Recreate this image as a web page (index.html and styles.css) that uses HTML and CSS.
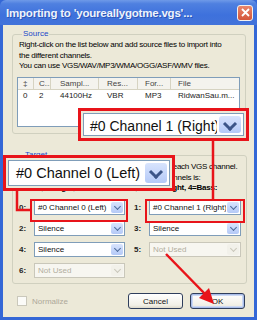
FILE: index.html
```html
<!DOCTYPE html>
<html>
<head>
  <meta charset="UTF-8">
  <title>Importing</title>
  <link rel="stylesheet" href="styles.css">
</head>
<body>
  <div class="window">
    <div class="titlebar">
      <span class="title">Importing to 'youreallygotme.vgs'...</span>
      <span class="close">
        <svg width="9" height="9" viewBox="0 0 9 9"><path d="M1 1L8 8M8 1L1 8" stroke="#fff" stroke-width="1.8"/></svg>
      </span>
    </div>
    <div class="client">
      <fieldset class="group source">
        <legend>Source</legend>
        <p class="hint">Right-click on the list below and add source files to import into<br>the different channels.<br>You can use VGS/WAV/MP3/WMA/OGG/ASF/WMV files.</p>
        <div class="listview">
          <div class="lv-row lv-head">
            <span class="c1">‡</span><span class="c2">C...</span><span class="c3">Sampl...</span><span class="c4">Res...</span><span class="c5">For...</span><span class="c6">File</span>
          </div>
          <div class="lv-row">
            <span class="c1">0</span><span class="c2">2</span><span class="c3">44100Hz</span><span class="c4">VBR</span><span class="c5">MP3</span><span class="c6">RidwanSau.m...</span>
          </div>
        </div>
      </fieldset>
      <fieldset class="group target">
        <legend>Target</legend>
        <p class="hint">Select which of the source channels to use for each VGS channel.<br>The standard (5.1) order of the target VGS channels is:<br><b>0=Left, 1=Right, 2=Surround Left, 3=Surr.Right, 4=Bass:</b></p>
        <div class="channels">
          <span class="ch-label">0:</span><span class="combo"><span class="combo-text">#0 Channel 0 (Left)</span><span class="combo-btn"></span></span>
          <span class="ch-label second">1:</span><span class="combo"><span class="combo-text">#0 Channel 1 (Right)</span><span class="combo-btn"></span></span>
          <span class="ch-label">2:</span><span class="combo"><span class="combo-text">Silence</span><span class="combo-btn"></span></span>
          <span class="ch-label second">3:</span><span class="combo"><span class="combo-text">Silence</span><span class="combo-btn"></span></span>
          <span class="ch-label">4:</span><span class="combo"><span class="combo-text">Silence</span><span class="combo-btn"></span></span>
          <span class="ch-label second">5:</span><span class="combo disabled"><span class="combo-text">Not Used</span><span class="combo-btn"></span></span>
          <span class="ch-label">6:</span><span class="combo disabled"><span class="combo-text">Not Used</span><span class="combo-btn"></span></span>
        </div>
      </fieldset>
      <div class="footer">
        <label class="check"><span class="box"></span>Normalize</label>
        <div class="buttons">
          <button class="btn">Cancel</button>
          <button class="btn default">OK</button>
        </div>
      </div>
    </div>

    <div class="callout callout-right">
      <span class="combo big"><span class="combo-text">#0 Channel 1 (Right)</span><span class="combo-btn"></span></span>
    </div>
    <div class="callout callout-left">
      <span class="combo big"><span class="combo-text">#0 Channel 0 (Left)</span><span class="combo-btn"></span></span>
    </div>
    <div class="mark mark-0"></div>
    <div class="mark mark-1"></div>
    <svg class="lines" width="257" height="320" viewBox="0 0 257 320">
      <path d="M213 140V199" stroke="#e8141a" stroke-width="2.5" fill="none"/>
      <path d="M17 190V210H31" stroke="#e8141a" stroke-width="2.5" fill="none"/>
      <path d="M166 254L206 295" stroke="#e8141a" stroke-width="2.5" fill="none"/>
      <path d="M214 304L199 298L209 288Z" fill="#e8141a"/>
    </svg>
  </div>
</body>
</html>
```

FILE: styles.css
```css
* {
  box-sizing: border-box;
  margin: 0;
  padding: 0;
}

body {
  background: #ffffff;
  font-family: "Liberation Sans", Arial, sans-serif;
  font-size: 8px;
  color: #000;
}

.window {
  position: relative;
  width: 257px;
  height: 320px;
  background: #3467d6;
  padding: 0 3px 3px 3px;
  display: flex;
  flex-direction: column;
  overflow: hidden;
}

.titlebar {
  height: 25px;
  margin: 0 -3px;
  padding: 0 4px 0 6px;
  display: flex;
  align-items: center;
  justify-content: space-between;
  background: linear-gradient(#6f9ae8 0%, #4f80e0 15%, #3e71dc 60%, #4273da 100%);
  border-radius: 6px 6px 0 0;
}

.title {
  color: #eef3fc;
  font-weight: bold;
  font-size: 11.5px;
  letter-spacing: -0.2px;
  text-shadow: 1px 1px 0 #2c56b8;
}

.close {
  width: 16px;
  height: 16px;
  display: flex;
  align-items: center;
  justify-content: center;
  background: linear-gradient(#e8866c, #d4553a);
  border: 1px solid #f4f1ee;
  border-radius: 3px;
}

.client {
  flex: 1;
  background: #ece9d8;
  padding: 4px 8px 0 9px;
}

.group {
  border: 1px solid #d0d0bf;
  border-radius: 3px;
}

.group legend {
  color: #1a48c8;
  font-size: 8px;
  line-height: 10px;
  margin-left: 5px;
  padding: 0 1px;
}

.hint {
  line-height: 10.5px;
  margin-left: 2px;
  letter-spacing: -0.25px;
  white-space: nowrap;
}

.source {
  height: 105px;
  padding: 1px 5px 0 4px;
}

.listview {
  margin-top: 5px;
  width: 223px;
  height: 50px;
  background: #fff;
  border: 1px solid #7f9db9;
}

.lv-row {
  display: flex;
  height: 12px;
  line-height: 12px;
  color: #222;
}

.lv-head {
  background: #f4f3ee;
  border-bottom: 1px solid #d6d3c2;
  color: #444;
}

.lv-row span {
  padding-left: 5px;
  white-space: nowrap;
  overflow: hidden;
}

.lv-head span {
  border-right: 1px solid #d6d3c2;
}

.lv-head span:last-child {
  border-right: none;
}

.c1 { width: 16px; }
.c2 { width: 17px; }
.c3 { width: 48px; padding-left: 9px !important; }
.c4 { width: 39px; padding-left: 8px !important; }
.c5 { width: 33px; padding-left: 7px !important; }
.c6 { flex: 1; padding-left: 7px !important; }

.target {
  margin-top: 16px;
  height: 134px;
  padding: 2px 5px 0 6px;
}

.target .hint {
  margin-left: 0;
  height: 38px;
  overflow: hidden;
}

.channels {
  display: grid;
  grid-template-columns: 15px 91px 24px 92px;
  grid-auto-rows: 15px;
  row-gap: 6px;
  align-items: center;
}

.ch-label {
  font-weight: bold;
  font-size: 8px;
  color: #222;
}

.ch-label.second {
  padding-left: 9px;
}

.combo {
  display: flex;
  height: 15px;
  background: #fff;
  border: 1px solid #7f9db9;
  align-items: stretch;
  overflow: hidden;
}

.combo-text {
  flex: 1;
  padding-left: 3px;
  line-height: 13px;
  white-space: nowrap;
  overflow: hidden;
  color: #111;
}

.combo-btn {
  width: 12px;
  margin: 1px;
  border-radius: 2px;
  background: linear-gradient(#d8e4fd, #b4c9f7);
  position: relative;
}

.combo-btn::after {
  content: "";
  position: absolute;
  left: 50%;
  top: 50%;
  width: 4px;
  height: 4px;
  margin: -4px 0 0 -2.5px;
  border-right: 1.5px solid #4d6a9a;
  border-bottom: 1.5px solid #4d6a9a;
  transform: rotate(45deg);
}

.combo.disabled {
  border-color: #c9c7ba;
  background: #f7f6f0;
}

.combo.disabled .combo-text {
  color: #b2ae9e;
}

.combo.disabled .combo-btn {
  background: #f2f1ea;
}

.combo.disabled .combo-btn::after {
  border-color: #c9c7ba;
}

.footer {
  margin-top: 9px;
  padding: 0 1px 0 5px;
  display: flex;
  align-items: center;
  justify-content: space-between;
  height: 16px;
}

.check {
  display: flex;
  align-items: center;
  color: #aca899;
  gap: 5px;
}

.check .box {
  width: 10px;
  height: 10px;
  border: 1px solid #cac8bb;
  background: #fbfbf8;
}

.buttons {
  display: flex;
  gap: 7px;
}

.btn {
  width: 55px;
  height: 16px;
  font-family: "Liberation Sans", Arial, sans-serif;
  font-size: 8px;
  color: #111;
  background: linear-gradient(#ffffff, #f1efe6 80%, #dcd8ca);
  border: 1px solid #2f3e5c;
  border-radius: 3px;
}

.btn.default {
  box-shadow: inset 0 0 0 1px #a9bde9, inset 0 0 0 2px #cdd9f3;
}

.callout {
  position: absolute;
  border: 3px solid #e8141a;
  background: #ece9d8;
  padding: 2px;
}

.callout-right {
  left: 78px;
  top: 108px;
  width: 171px;
  height: 33px;
}

.callout-left {
  left: 3px;
  top: 155px;
  width: 172px;
  height: 36px;
}

.combo.big {
  height: 100%;
  border-color: #7f9db9;
}

.combo.big .combo-text {
  font-size: 14.5px;
  line-height: 24px;
  padding-left: 7px;
  color: #111;
}

.callout-right .combo.big .combo-text {
  font-size: 14px;
  padding-left: 6px;
}

.combo.big .combo-btn {
  width: 22px;
  margin: 2px;
  border-radius: 3px;
}

.combo.big .combo-btn::after {
  width: 7px;
  height: 7px;
  margin: -6px 0 0 -5px;
  border-width: 3px;
  border-color: #3c5588;
}

.callout-left .combo-text {
  line-height: 27px;
}

.mark {
  position: absolute;
  border: 2px solid #e8141a;
}

.mark-0 {
  left: 30px;
  top: 199px;
  width: 98px;
  height: 23px;
}

.mark-1 {
  left: 145px;
  top: 199px;
  width: 100px;
  height: 24px;
}

.lines {
  position: absolute;
  left: 0;
  top: 0;
  pointer-events: none;
}
```
